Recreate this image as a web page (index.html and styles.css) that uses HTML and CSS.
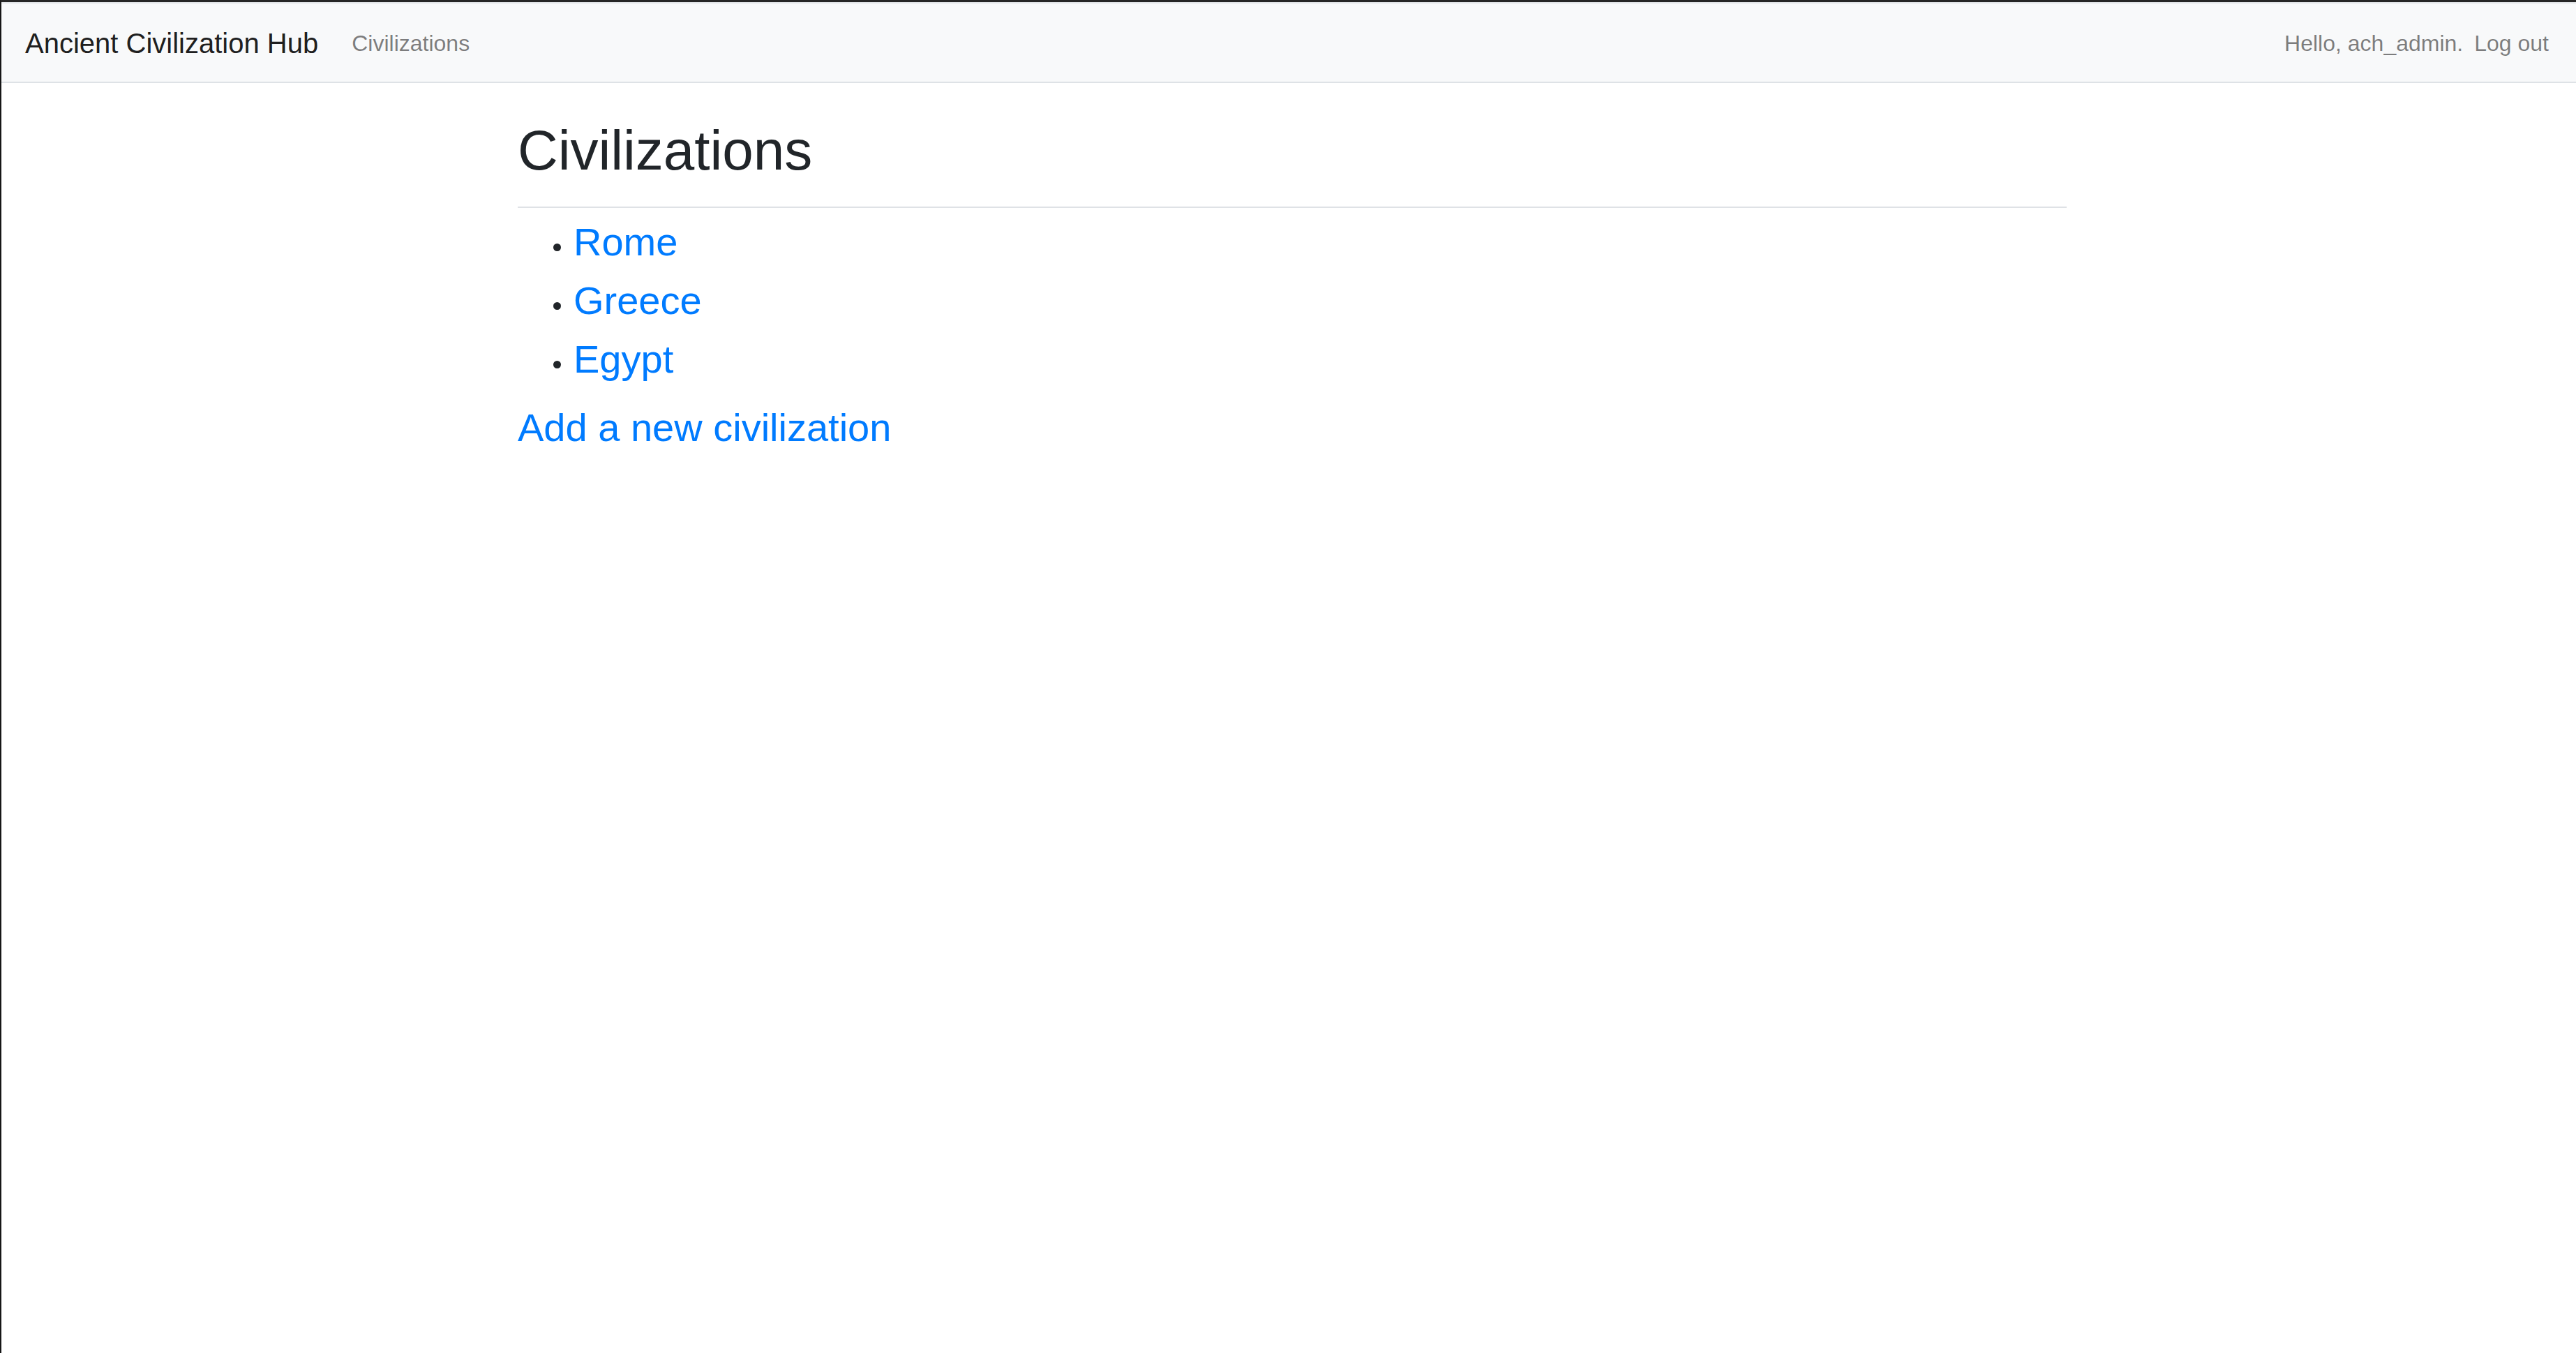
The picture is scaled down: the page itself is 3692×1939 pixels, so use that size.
FILE: index.html
```html
<!DOCTYPE html>
<html lang="en">
<head>
<meta charset="utf-8">
<title>Civilizations - Ancient Civilization Hub</title>
<link rel="stylesheet" href="styles.css">
</head>
<body>
<nav class="navbar">
  <div class="navbar-left">
    <a class="navbar-brand" href="#">Ancient Civilization Hub</a>
    <a class="nav-link" href="#">Civilizations</a>
  </div>
  <div class="navbar-right">
    <span class="navbar-text">Hello, ach_admin.</span>
    <a class="nav-link logout" href="#">Log out</a>
  </div>
</nav>
<main class="main">
  <div class="container">
    <h1 class="page-title">Civilizations</h1>
    <hr class="divider">
    <ul class="civ-list">
      <li><a class="civ-link" href="#">Rome</a></li>
      <li><a class="civ-link" href="#">Greece</a></li>
      <li><a class="civ-link" href="#">Egypt</a></li>
    </ul>
    <a class="add-link" href="#">Add a new civilization</a>
  </div>
</main>
</body>
</html>
```

FILE: styles.css
```css
* {
  box-sizing: border-box;
}

html, body {
  margin: 0;
  padding: 0;
}

body {
  min-height: 100vh;
  font-family: "Liberation Sans", Arial, Helvetica, sans-serif;
  font-size: 32px;
  line-height: 1.5;
  color: #212529;
  background: #ffffff;
  border-left: 2px solid #161616;
  border-top: 3px solid #262626;
}

a {
  text-decoration: none;
}

.navbar {
  display: flex;
  align-items: center;
  justify-content: space-between;
  background: #f8f9fa;
  border-top: 2px solid #e1e4e7;
  border-bottom: 2px solid #dee2e6;
  padding: 17px 23px 15px 34px;
}

.navbar-left,
.navbar-right {
  display: flex;
  align-items: center;
}

.navbar-brand {
  font-size: 40px;
  line-height: 60px;
  padding: 10px 0;
  margin-right: 32px;
  color: rgba(0, 0, 0, 0.9);
  white-space: nowrap;
}

.nav-link {
  display: block;
  font-size: 32px;
  line-height: 48px;
  padding: 16px;
  color: rgba(0, 0, 0, 0.5);
  white-space: nowrap;
}

.navbar-text {
  font-size: 32px;
  line-height: 48px;
  padding: 16px 0;
  color: rgba(0, 0, 0, 0.5);
  white-space: nowrap;
}

.main {
  padding: 49px 0 0 10px;
}

.container {
  width: 100%;
  max-width: 2280px;
  margin: 0 auto;
  padding: 0 30px;
}

.page-title {
  margin: 0 0 32px;
  font-size: 80px;
  line-height: 96px;
  font-weight: 400;
  color: #212529;
}

.divider {
  margin: 0;
  border: 0;
  border-top: 2px solid #dfe2e6;
  height: 0;
}

.civ-list {
  margin: 7px 0 14px;
  padding-left: 80px;
  list-style: disc;
  font-size: 32px;
  line-height: 48px;
  color: #212529;
}

.civ-list li::marker {
  font-size: 36px;
}

.civ-link {
  font-size: 56px;
  line-height: 84px;
  color: #007bff;
}

.add-link {
  display: block;
  font-size: 56px;
  line-height: 84px;
  color: #007bff;
  width: max-content;
}
```
